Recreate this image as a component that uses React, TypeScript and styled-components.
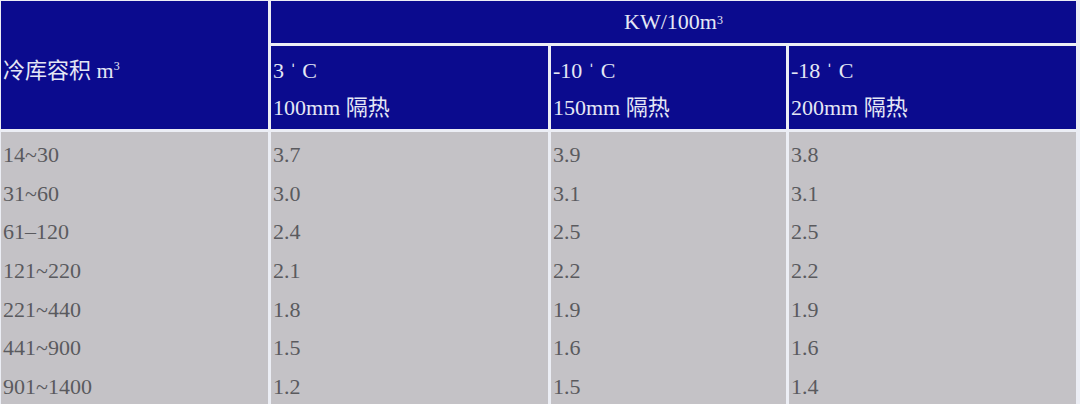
import React from "react";
import styled, { createGlobalStyle } from "styled-components";

const GlobalStyle = createGlobalStyle`
    html, body {
        margin: 0;
        padding: 0;
        background: #eceef5;
    }
    body {
        font-family: "Liberation Serif", "Noto Sans CJK SC", serif;
    }
`;

const rows: string[][] = [
    ["14~30", "3.7", "3.9", "3.8"],
    ["31~60", "3.0", "3.1", "3.1"],
    ["61\u2013120", "2.4", "2.5", "2.5"],
    ["121~220", "2.1", "2.2", "2.2"],
    ["221~440", "1.8", "1.9", "1.9"],
    ["441~900", "1.5", "1.6", "1.6"],
    ["901~1400", "1.2", "1.5", "1.4"],
];

const temps = [
    { temp: "3 \u02C8 C", insulation: "100mm 隔热" },
    { temp: "-10 \u02C8 C", insulation: "150mm 隔热" },
    { temp: "-18 \u02C8 C", insulation: "200mm 隔热" },
];

const App: React.FC = () => {
    return (
        <>
            <GlobalStyle />
            <Page>
                <HeaderGrid>
                    <VolumeHead>
                        冷库容积 m<Sup>3</Sup>
                    </VolumeHead>
                    <UnitHead>
                        KW/100m<Sup>3</Sup>
                    </UnitHead>
                    {temps.map((t) => (
                        <TempHead key={t.temp}>
                            <Line>{t.temp}</Line>
                            <Line>{t.insulation}</Line>
                        </TempHead>
                    ))}
                </HeaderGrid>
                <BodyGrid>
                    {rows.map((row) =>
                        row.map((value, i) => (
                            <Cell key={row[0] + i}>{value}</Cell>
                        ))
                    )}
                </BodyGrid>
            </Page>
        </>
    );
};

const columns = "267px 277px 235px 287px";

export const Page = styled.div`
    display: flex;
    flex-direction: column;
    gap: 3px;
    padding: 1px 4px 0 1px;
    width: 1080px;
    height: 404px;
    box-sizing: border-box;
    overflow: hidden;
    font-size: 22px;
`;

export const HeaderGrid = styled.div`
    display: grid;
    grid-template-columns: ${columns};
    grid-template-rows: 42px 83px;
    gap: 3px;
    color: #e4e7f5;
`;

const HeadCell = styled.div`
    background: #0b0b8e;
    box-sizing: border-box;
`;

export const VolumeHead = styled(HeadCell)`
    grid-row: 1 / span 2;
    display: flex;
    align-items: center;
    padding: 6px 2px 0;
`;

export const UnitHead = styled(HeadCell)`
    grid-column: 2 / span 3;
    display: flex;
    align-items: center;
    justify-content: center;
`;

export const TempHead = styled(HeadCell)`
    display: flex;
    flex-direction: column;
    padding: 6px 2px 0;
`;

export const Line = styled.div`
    line-height: 37px;
    white-space: nowrap;
`;

export const Sup = styled.sup`
    font-size: 12px;
    vertical-align: top;
    line-height: 1;
    position: relative;
    top: -2px;
`;

export const BodyGrid = styled.div`
    flex: 1;
    display: grid;
    grid-template-columns: ${columns};
    grid-auto-rows: 38.7px;
    column-gap: 3px;
    align-content: start;
    padding-top: 4px;
    background: linear-gradient(
        to right,
        #c4c2c6 0 267px,
        transparent 267px 270px,
        #c4c2c6 270px 547px,
        transparent 547px 550px,
        #c4c2c6 550px 785px,
        transparent 785px 788px,
        #c4c2c6 788px 1075px,
        transparent 1075px
    );
`;

export const Cell = styled.div`
    padding: 0 2px;
    line-height: 38.7px;
    color: #5a5a5e;
    white-space: nowrap;
`;

export default App;
